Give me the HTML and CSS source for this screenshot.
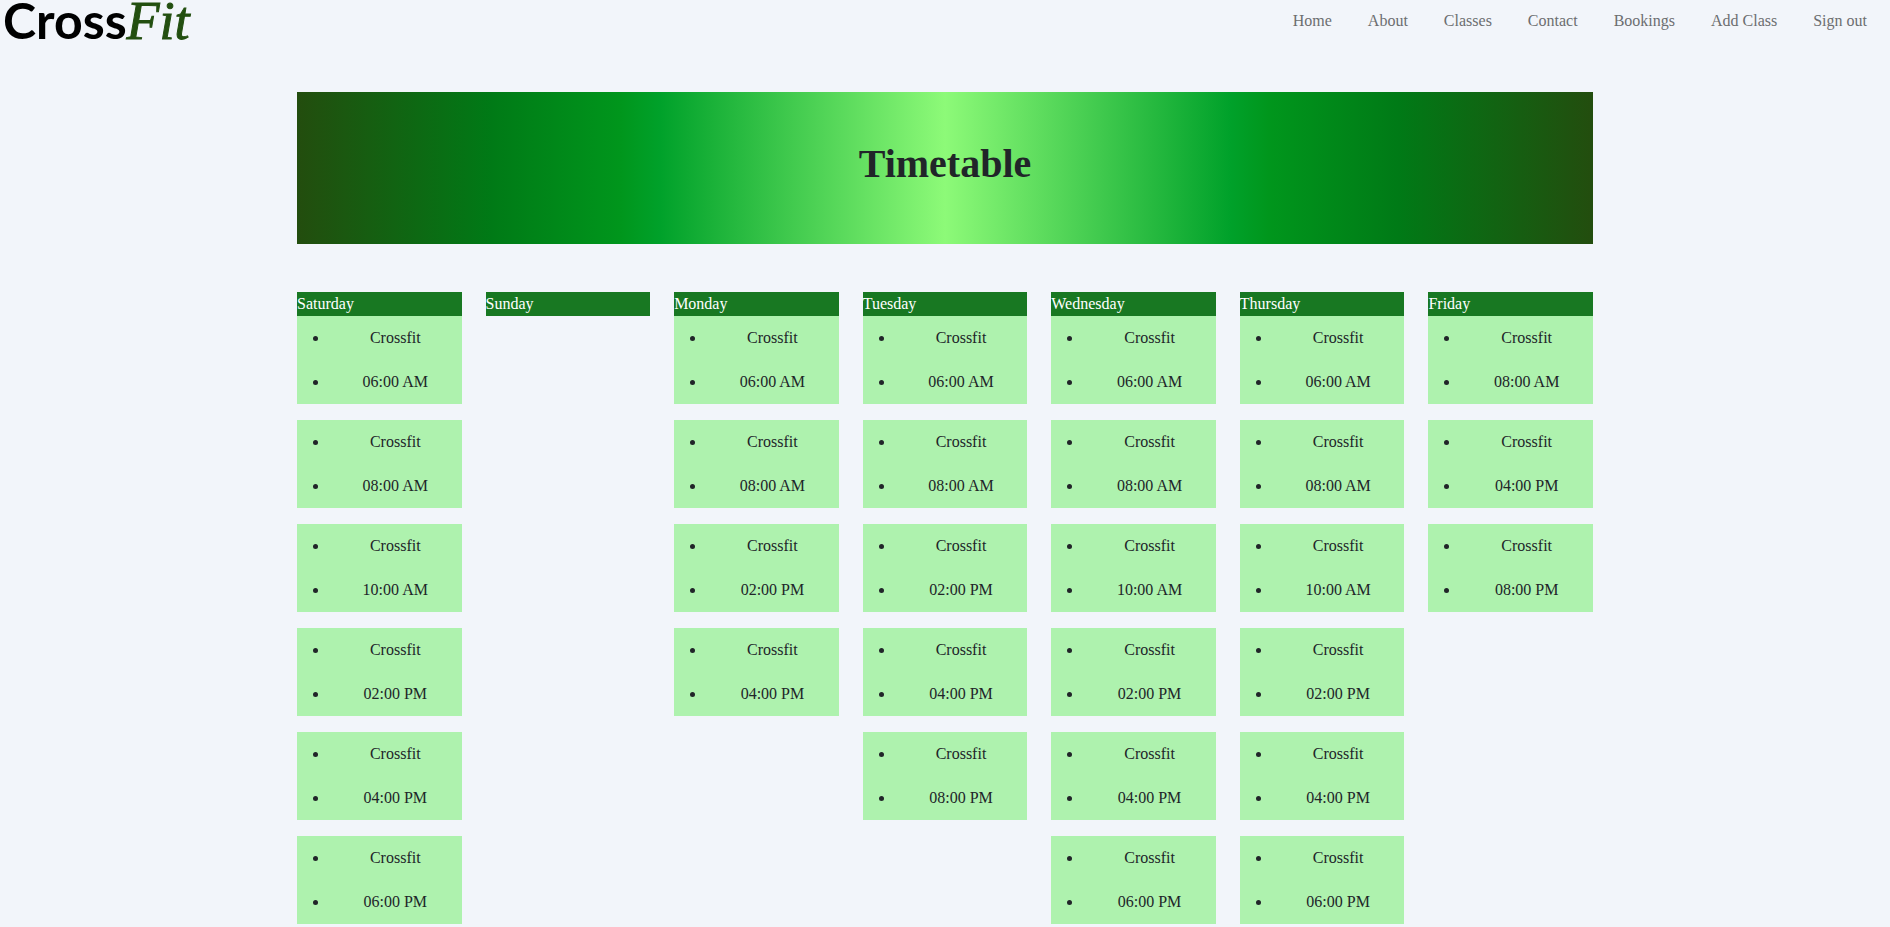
FILE: index.html
```html
<!DOCTYPE html>
<html lang="en">
<head>
<meta charset="utf-8">
<meta name="viewport" content="width=device-width, initial-scale=1">
<title>CrossFit - Timetable</title>
<link rel="stylesheet" href="styles.css">
</head>
<body>
<header class="site-header">
  <a class="logo" href="#"><span class="logo-cross">Cross</span><span class="logo-fit">Fit</span></a>
  <nav class="site-nav" aria-label="Main">
    <a href="#">Home</a>
    <a href="#">About</a>
    <a href="#">Classes</a>
    <a href="#">Contact</a>
    <a href="#">Bookings</a>
    <a href="#">Add Class</a>
    <a href="#">Sign out</a>
  </nav>
</header>
<main class="container">
  <div class="banner"><h1>Timetable</h1></div>
  <div class="week">
    <section class="day">
      <h2>Saturday</h2>
      <ul class="session"><li>Crossfit</li><li>06:00 AM</li></ul>
      <ul class="session"><li>Crossfit</li><li>08:00 AM</li></ul>
      <ul class="session"><li>Crossfit</li><li>10:00 AM</li></ul>
      <ul class="session"><li>Crossfit</li><li>02:00 PM</li></ul>
      <ul class="session"><li>Crossfit</li><li>04:00 PM</li></ul>
      <ul class="session"><li>Crossfit</li><li>06:00 PM</li></ul>
    </section>
    <section class="day">
      <h2>Sunday</h2>
    </section>
    <section class="day">
      <h2>Monday</h2>
      <ul class="session"><li>Crossfit</li><li>06:00 AM</li></ul>
      <ul class="session"><li>Crossfit</li><li>08:00 AM</li></ul>
      <ul class="session"><li>Crossfit</li><li>02:00 PM</li></ul>
      <ul class="session"><li>Crossfit</li><li>04:00 PM</li></ul>
    </section>
    <section class="day">
      <h2>Tuesday</h2>
      <ul class="session"><li>Crossfit</li><li>06:00 AM</li></ul>
      <ul class="session"><li>Crossfit</li><li>08:00 AM</li></ul>
      <ul class="session"><li>Crossfit</li><li>02:00 PM</li></ul>
      <ul class="session"><li>Crossfit</li><li>04:00 PM</li></ul>
      <ul class="session"><li>Crossfit</li><li>08:00 PM</li></ul>
    </section>
    <section class="day">
      <h2>Wednesday</h2>
      <ul class="session"><li>Crossfit</li><li>06:00 AM</li></ul>
      <ul class="session"><li>Crossfit</li><li>08:00 AM</li></ul>
      <ul class="session"><li>Crossfit</li><li>10:00 AM</li></ul>
      <ul class="session"><li>Crossfit</li><li>02:00 PM</li></ul>
      <ul class="session"><li>Crossfit</li><li>04:00 PM</li></ul>
      <ul class="session"><li>Crossfit</li><li>06:00 PM</li></ul>
    </section>
    <section class="day">
      <h2>Thursday</h2>
      <ul class="session"><li>Crossfit</li><li>06:00 AM</li></ul>
      <ul class="session"><li>Crossfit</li><li>08:00 AM</li></ul>
      <ul class="session"><li>Crossfit</li><li>10:00 AM</li></ul>
      <ul class="session"><li>Crossfit</li><li>02:00 PM</li></ul>
      <ul class="session"><li>Crossfit</li><li>04:00 PM</li></ul>
      <ul class="session"><li>Crossfit</li><li>06:00 PM</li></ul>
    </section>
    <section class="day">
      <h2>Friday</h2>
      <ul class="session"><li>Crossfit</li><li>08:00 AM</li></ul>
      <ul class="session"><li>Crossfit</li><li>04:00 PM</li></ul>
      <ul class="session"><li>Crossfit</li><li>08:00 PM</li></ul>
    </section>
  </div>
</main>
</body>
</html>
```

FILE: styles.css
```css
*, *::before, *::after { box-sizing: border-box; }

body {
  margin: 0;
  background: #f2f5fa;
  color: #212529;
  font-family: "Liberation Serif", "Times New Roman", serif;
  font-size: 16px;
  line-height: 24px;
}

.site-header {
  display: flex;
  justify-content: space-between;
  align-items: flex-start;
  height: 44px;
  padding: 0 23px 0 3px;
}

.logo {
  display: flex;
  align-items: baseline;
  line-height: 40px;
  text-decoration: none;
}

.logo-cross {
  color: #000;
  font-family: Lato, sans-serif;
  font-size: 50px;
  font-weight: 700;
}

.logo-fit {
  color: #234f10;
  font-size: 54px;
  font-style: italic;
  -webkit-text-stroke: 1px #234f10;
}

.site-nav {
  display: flex;
  gap: 36px;
  padding-top: 9px;
}

.site-nav a {
  color: #6c6e70;
  text-decoration: none;
}

.container {
  max-width: 1320px;
  margin: 0 auto;
  padding: 48px 12px 0;
}

.banner {
  padding: 48px 0 56px;
  text-align: center;
  background: linear-gradient(90deg, #234d0e 0%, #007a16 15%, #00961c 25%, #00a12a 28%, #8dfa78 50%, #00a12a 72%, #00961c 75%, #007a16 85%, #234d0e 100%);
}

.banner h1 {
  margin: 0;
  font-size: 40px;
  font-weight: 700;
  line-height: 48px;
}

.week {
  display: grid;
  grid-template-columns: repeat(7, 1fr);
  gap: 24px;
  margin-top: 48px;
}

.day h2 {
  margin: 0;
  background: #187822;
  color: #fff;
  font-size: 16px;
  font-weight: 400;
  line-height: 24px;
}

.session {
  margin: 0 0 16px;
  padding: 0 0 0 32px;
  background: #aef2ae;
  text-align: center;
}

.session li { padding: 10px 0; }
```
